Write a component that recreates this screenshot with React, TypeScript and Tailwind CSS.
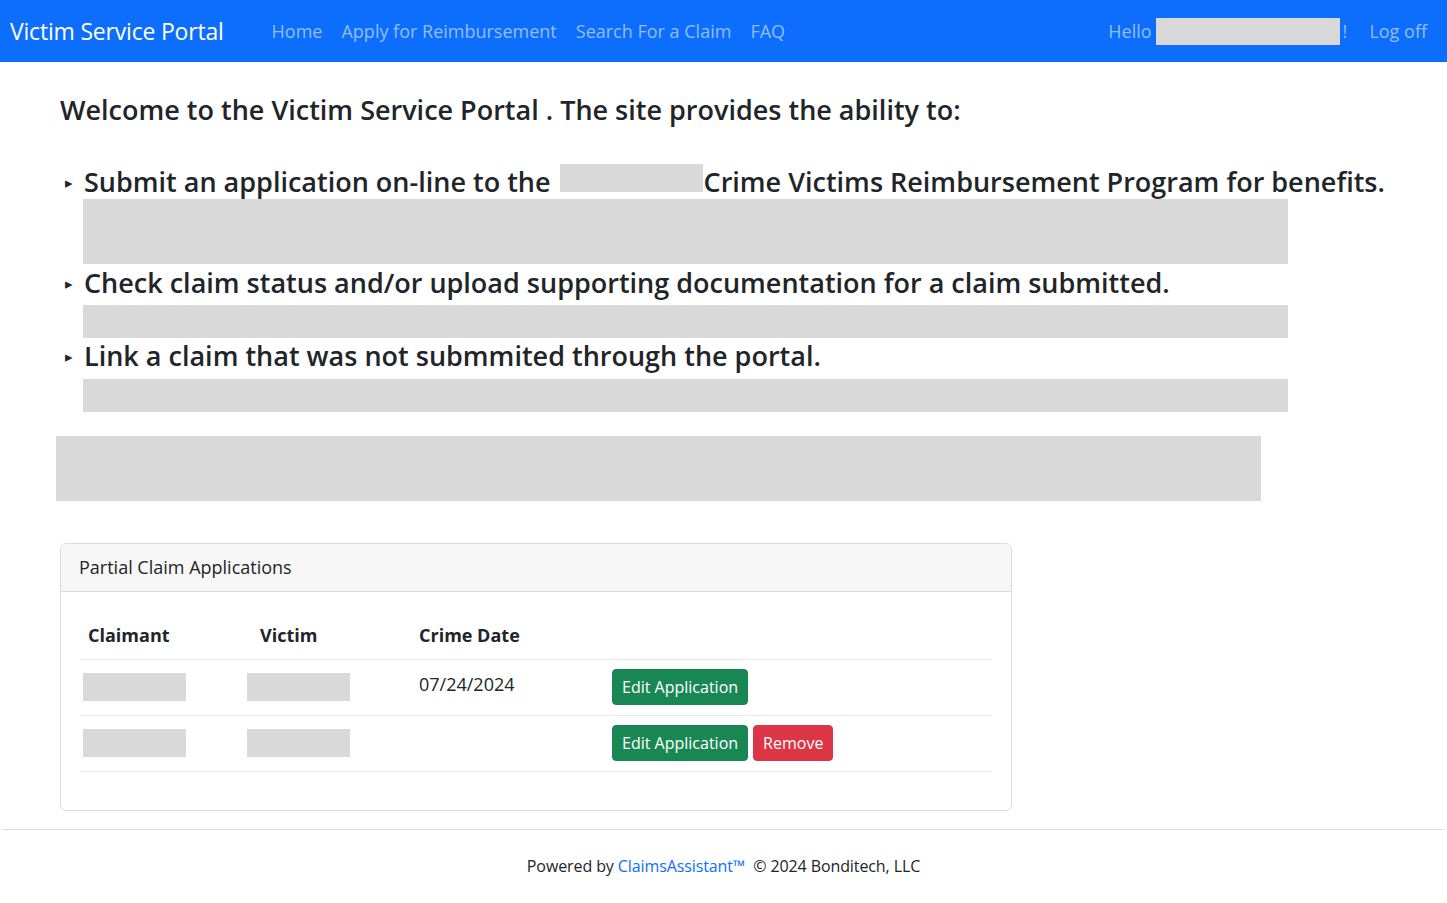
import React from "react";

const font = { fontFamily: '"Open Sans", "Noto Sans", sans-serif' };

function Redacted({ className }: { className: string }) {
  return <div className={`bg-[#d9d9d9] ${className}`} />;
}

function NavBar() {
  return (
    <nav className="h-[62px] bg-[#0d6efd] flex items-center px-[10px]">
      <span className="text-white text-[23px] tracking-[-0.2px]">Victim Service Portal</span>
      <ul className="flex items-center gap-[19px] ml-[48px] text-[18px] text-[#92befe]">
        <li>Home</li>
        <li>Apply for Reimbursement</li>
        <li>Search For a Claim</li>
        <li>FAQ</li>
      </ul>
      <div className="ml-auto flex items-center text-[18px] text-[#92befe] pr-[10px]">
        <span>Hello</span>
        <Redacted className="w-[184px] h-[27px] ml-[4px]" />
        <span className="ml-[3px]">!</span>
        <span className="ml-[22px]">Log off</span>
      </div>
    </nav>
  );
}

function Bullet({ children }: { children: React.ReactNode }) {
  return (
    <div className="flex items-center h-[34px]">
      <span className="w-[24px] text-[15px] pl-[5px] text-[#212529]">&#9656;</span>
      <div className="text-[27px] text-[#212529] font-semibold leading-[34px]">{children}</div>
    </div>
  );
}

function Intro() {
  return (
    <section className="pl-[60px] pt-[28px]">
      <h1 className="text-[27px] text-[#212529] font-semibold leading-[40px]">
        Welcome to the Victim Service Portal . The site provides the ability to:
      </h1>
      <div className="mt-[35px]">
        <Bullet>
          <span className="inline-flex items-center">
            Submit an application on-line to the
            <Redacted className="inline-block w-[143px] h-[28px] ml-[9px] mr-[1px] -translate-y-[4px]" />
            Crime Victims Reimbursement Program for benefits.
          </span>
        </Bullet>
        <Redacted className="ml-[23px] w-[1205px] h-[65px]" />
        <div className="mt-[2px]">
          <Bullet>Check claim status and/or upload supporting documentation for a claim submitted.</Bullet>
        </div>
        <Redacted className="ml-[23px] mt-[5px] w-[1205px] h-[33px]" />
        <div className="mt-[1px]">
          <Bullet>Link a claim that was not submmited through the portal.</Bullet>
        </div>
        <Redacted className="ml-[23px] mt-[6px] w-[1205px] h-[33px]" />
      </div>
      <Redacted className="-ml-[4px] mt-[24px] w-[1205px] h-[65px]" />
    </section>
  );
}

function Btn({ color, children }: { color: "green" | "red"; children: React.ReactNode }) {
  const cls = color === "green" ? "bg-[#198754] border-[#198754]" : "bg-[#dc3545] border-[#dc3545]";
  return (
    <button className={`${cls} border text-white text-[16px] h-[36px] px-[9px] rounded-[4px] leading-none`}>
      {children}
    </button>
  );
}

function ClaimsCard() {
  return (
    <div className="ml-[60px] mt-[42px] w-[952px] border border-[#dcdcdc] rounded-[6px] overflow-hidden">
      <div className="h-[48px] bg-[#f7f7f7] border-b border-[#dcdcdc] flex items-center px-[18px] text-[18px] text-[#212529]">
        Partial Claim Applications
      </div>
      <div className="px-[19px] pt-[20px] pb-[38px]">
        <table className="w-full text-[18px] text-[#212529] border-collapse">
          <thead>
            <tr className="border-b border-[#e6e6e6] h-[47px]">
              <th className="w-[172px] text-left font-bold px-[8px]">Claimant</th>
              <th className="w-[159px] text-left font-bold px-[8px]">Victim</th>
              <th className="w-[193px] text-left font-bold px-[8px]">Crime Date</th>
              <th />
            </tr>
          </thead>
          <tbody>
            <tr className="border-b border-[#e6e6e6] h-[56px]">
              <td className="px-[8px] align-middle"><Redacted className="-ml-[5px] w-[103px] h-[28px]" /></td>
              <td className="px-[8px] align-middle"><Redacted className="-ml-[13px] w-[103px] h-[28px]" /></td>
              <td className="px-[8px] align-top pt-[11px]">07/24/2024</td>
              <td className="px-[8px] align-middle"><Btn color="green">Edit Application</Btn></td>
            </tr>
            <tr className="border-b border-[#e6e6e6] h-[56px]">
              <td className="px-[8px] align-middle"><Redacted className="-ml-[5px] w-[103px] h-[28px]" /></td>
              <td className="px-[8px] align-middle"><Redacted className="-ml-[13px] w-[103px] h-[28px]" /></td>
              <td className="px-[8px]" />
              <td className="px-[8px] align-middle">
                <div className="flex gap-[5px]">
                  <Btn color="green">Edit Application</Btn>
                  <Btn color="red">Remove</Btn>
                </div>
              </td>
            </tr>
          </tbody>
        </table>
      </div>
    </div>
  );
}

function Footer() {
  return (
    <footer className="mt-[18px] mx-[2px] border-t border-[#dedede] pt-[24px] text-center text-[16px] text-[#212529] tracking-[-0.1px]">
      Powered by <span className="text-[#0d6efd]">ClaimsAssistant™</span>&nbsp; © 2024 Bonditech, LLC
    </footer>
  );
}

export default function App() {
  return (
    <div className="min-h-screen bg-white" style={font}>
      <NavBar />
      <Intro />
      <ClaimsCard />
      <Footer />
    </div>
  );
}
